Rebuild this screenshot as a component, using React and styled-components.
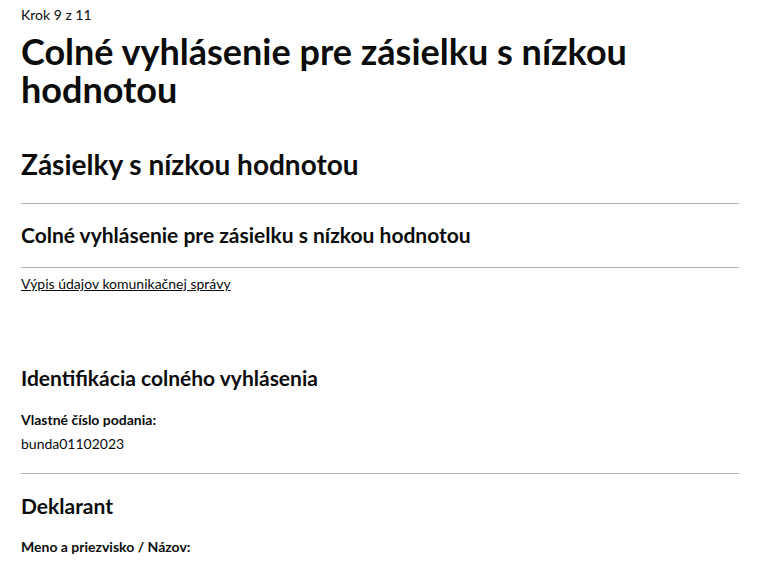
import styled, { createGlobalStyle } from "styled-components";

const Global = createGlobalStyle`
  body {
    margin: 0;
    background: #fff;
    color: #0b0c0c;
    font-family: Lato, "Noto Sans", sans-serif;
  }
`;

const Page = styled.div`
  padding: 5px 19px 0 21px;
  display: flex;
  flex-direction: column;
`;

const Caption = styled.span`
  font-size: 14px;
  line-height: 20px;
`;

const Title = styled.h1`
  margin: 7px 0 0;
  font-size: 36px;
  line-height: 38px;
  font-weight: 700;
`;

const Heading = styled.h2`
  margin: 40px 0 0;
  font-size: 28px;
  line-height: 32px;
  font-weight: 700;
`;

const SubHeading = styled.h3`
  margin: ${(p) => p.$top || 0}px 0 0;
  font-size: 21px;
  line-height: 26px;
  font-weight: 700;
`;

const Rule = styled.hr`
  margin: ${(p) => p.$top || 0}px 0 0;
  border: 0;
  border-top: 1px solid #b1b4b6;
  height: 0;
`;

const Link = styled.a`
  margin-top: 6px;
  align-self: flex-start;
  font-size: 14px;
  line-height: 20px;
  color: #0b0c0c;
  text-decoration: underline;
`;

const Label = styled.div`
  margin-top: ${(p) => p.$top || 0}px;
  font-size: 14px;
  line-height: 24px;
  font-weight: 700;
`;

const Value = styled.div`
  font-size: 14px;
  line-height: 24px;
`;

export default function App() {
  return (
    <>
      <Global />
      <Page>
        <Caption>Krok 9 z 11</Caption>
        <Title>Colné vyhlásenie pre zásielku s nízkou hodnotou</Title>
        <Heading>Zásielky s nízkou hodnotou</Heading>
        <Rule $top={23} />
        <SubHeading $top={18}>Colné vyhlásenie pre zásielku s nízkou hodnotou</SubHeading>
        <Rule $top={19} />
        <Link href="#">Výpis údajov komunikačnej správy</Link>
        <SubHeading $top={71}>Identifikácia colného vyhlásenia</SubHeading>
        <Label $top={17}>Vlastné číslo podania:</Label>
        <Value>bunda01102023</Value>
        <Rule $top={17} />
        <SubHeading $top={19}>Deklarant</SubHeading>
        <Label $top={16}>Meno a priezvisko / Názov:</Label>
      </Page>
    </>
  );
}
